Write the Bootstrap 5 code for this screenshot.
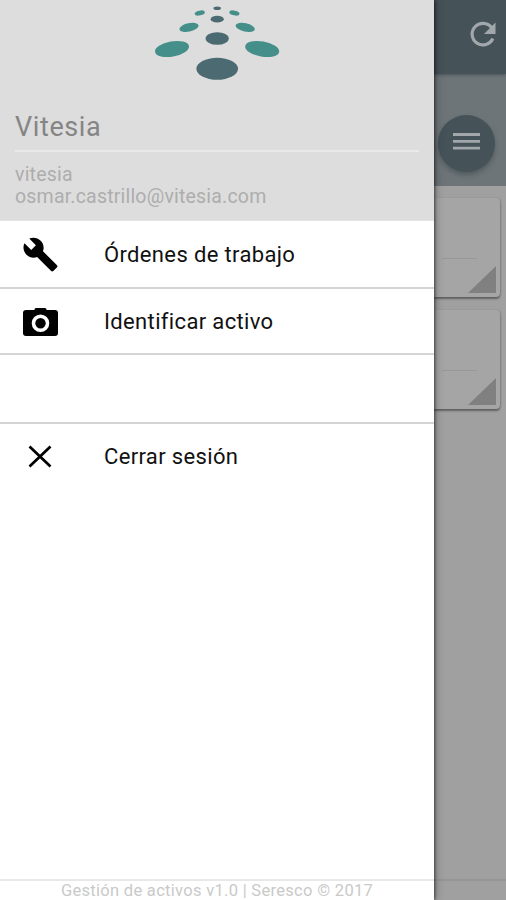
<!DOCTYPE html>
<html lang="es">
<head>
<meta charset="utf-8">
<meta name="viewport" content="width=device-width, initial-scale=1">
<title>Gestión de activos</title>
<link href="https://cdn.jsdelivr.net/npm/bootstrap@5.3.0/dist/css/bootstrap.min.css" rel="stylesheet">
<style>
body{font-family:Roboto,"Liberation Sans",sans-serif;background:#a0a0a0;color:#111}
.screen{width:506px;height:900px}
.drawer{width:434px;background:#fff;z-index:2;box-shadow:1px 0 3px rgba(0,0,0,.55),2px 0 9px rgba(0,0,0,.22)}
.drawer-head{height:221px;background:#ddd;padding:0 15px;border-bottom:1px solid #e4e4e4}
.logo{height:105px;margin:0 -15px}
.account{height:47px;border-bottom:2px solid #e9e9e9;color:#858585;font-size:27px;line-height:44px;letter-spacing:.6px}
.who{color:#adadad;font-size:19.5px;line-height:22px;padding-top:12px;letter-spacing:.2px}
.list-group-flush > .entry{height:68px;border:0;border-bottom:2px solid #d5d5d5;border-radius:0;padding:0 0 0 22px;font-size:22px;letter-spacing:.35px;color:#111;background:#fff}
.list-group-flush > .entry.short{height:66px}
.list-group-flush > .entry.gap-row{height:69px}
.list-group-flush > .entry.last-entry{border-bottom:0;height:65px}
.entry svg{width:37px;height:37px;margin-right:45px;flex:none}
.foot{height:21px;border-top:2px solid #e8e8e8;color:#c9c9c9;font-size:16.5px;line-height:20px;letter-spacing:.3px}
.behind{width:72px;background:#a0a0a0}
.topbar{height:74px;background:#455257;box-shadow:0 1px 3px rgba(50,60,65,.6);z-index:1}
.subbar{height:112px;background:#6d7579;padding:41px 0 0 4px}
.fab{width:57px;height:57px;background:#455257;box-shadow:0 3px 5px rgba(40,50,55,.4)}
.tiles{gap:13px}
.tile{width:66px;height:99px;background:#a5a5a5;border-radius:0 4px 4px 0;box-shadow:0 2px 2px rgba(0,0,0,.38),1px 0 2px rgba(0,0,0,.12);padding:0 4px 4px 8px}
.tile-rule{width:35px;height:61px;border-bottom:1px solid #989898}
.base{height:21px;border-top:2px solid #969696}
</style>
<script src="https://cdn.jsdelivr.net/npm/bootstrap@5.3.0/dist/js/bootstrap.bundle.min.js"></script>
</head>
<body class="overflow-hidden">
<div class="screen d-flex overflow-hidden">
  <aside class="drawer position-relative d-flex flex-column flex-shrink-0">
    <header class="drawer-head">
      <div class="logo">
        <svg class="d-block" width="434" height="90" viewBox="0 0 434 90" aria-hidden="true">
          <g fill="#4b6a71"><ellipse cx="217.2" cy="68.8" rx="20.8" ry="11"/><ellipse cx="217.2" cy="38.5" rx="11.6" ry="6.3"/><ellipse cx="217.2" cy="19.2" rx="6.6" ry="3.4"/><ellipse cx="217.2" cy="8.2" rx="3.8" ry="1.8"/></g>
          <g fill="#458f8b"><ellipse cx="172" cy="49" rx="17.2" ry="7.6" transform="rotate(-10 172 49)"/><ellipse cx="262.2" cy="49" rx="17.2" ry="7.6" transform="rotate(10 262.2 49)"/><ellipse cx="189" cy="27.4" rx="9.8" ry="4.2" transform="rotate(-12 189 27.4)"/><ellipse cx="245.2" cy="27.4" rx="9.8" ry="4.2" transform="rotate(12 245.2 27.4)"/><ellipse cx="199.8" cy="13" rx="5.2" ry="2.4" transform="rotate(-12 199.8 13)"/><ellipse cx="234.4" cy="13" rx="5.2" ry="2.4" transform="rotate(12 234.4 13)"/></g>
        </svg>
      </div>
      <div class="account">Vitesia</div>
      <div class="who"><div>vitesia</div><div>osmar.castrillo@vitesia.com</div></div>
    </header>
    <nav class="list-group list-group-flush">
      <a class="entry list-group-item d-flex align-items-center"><svg viewBox="0 0 24 24"><path d="M22.7 19l-9.1-9.1c.9-2.3.4-5-1.5-6.9-2-2-5-2.4-7.4-1.3L9 6 6 9 1.6 4.7C.4 7.1.9 10.1 2.9 12.1c1.9 1.9 4.6 2.4 6.9 1.5l9.1 9.1c.4.4 1 .4 1.4 0l2.3-2.3c.5-.4.5-1.1.1-1.4z"/></svg><span>Órdenes de trabajo</span></a>
      <a class="entry short list-group-item d-flex align-items-center"><svg viewBox="0 0 37 37"><path fill-rule="evenodd" d="M4 7h8.500v-.5q0-1.500 1.500-1.500h9q1.500 0 1.500 1.500v.5H33q3 0 3 3V30q0 3-3 3H4q-3 0-3-3V10q0-3 3-3zM18.500 11.500a8.800 8.800 0 1 0 0 17.600a8.800 8.800 0 1 0 0-17.600z"/><circle cx="18.500" cy="20.300" r="5.200"/></svg><span>Identificar activo</span></a>
      <div class="entry gap-row list-group-item"></div>
      <a class="entry last-entry list-group-item d-flex align-items-center"><svg viewBox="0 0 37 37"><path d="M7.500 8.500l21 20M28.500 8.500l-21 20" fill="none" stroke="#000" stroke-width="2.700"/></svg><span>Cerrar sesión</span></a>
    </nav>
    <footer class="foot text-center mt-auto text-nowrap"><span>Gestión de activos v1.0 | Seresco © 2017</span></footer>
  </aside>
  <main class="behind d-flex flex-column">
    <div class="topbar position-relative flex-shrink-0">
      <svg class="d-block" width="72" height="74" viewBox="0 0 72 74" aria-label="Actualizar"><path d="M57.500 27.500A10.800 10.800 0 1 0 58.800 38.500" fill="none" stroke="#a1a7aa" stroke-width="3.200"/><path d="M61.500 22.500v11.500H50z" fill="#a1a7aa"/></svg>
    </div>
    <div class="subbar flex-shrink-0">
      <div class="fab rounded-circle d-flex align-items-center justify-content-center"><svg class="mb-1" width="27" height="19" viewBox="0 0 27 19"><path d="M0 2.500h27M0 9.300h27M0 16.100h27" stroke="#a1a7aa" stroke-width="2.800"/></svg></div>
    </div>
    <div class="tiles d-flex flex-column mt-2 pt-1">
      <div class="tile d-flex flex-column justify-content-between"><div class="tile-rule"></div><svg class="align-self-end" width="28" height="27" viewBox="0 0 28 27"><path d="M28 0v27H0z" fill="#808080"/></svg></div>
      <div class="tile d-flex flex-column justify-content-between"><div class="tile-rule"></div><svg class="align-self-end" width="28" height="27" viewBox="0 0 28 27"><path d="M28 0v27H0z" fill="#808080"/></svg></div>
    </div>
    <div class="base mt-auto"></div>
  </main>
</div>
</body>
</html>
